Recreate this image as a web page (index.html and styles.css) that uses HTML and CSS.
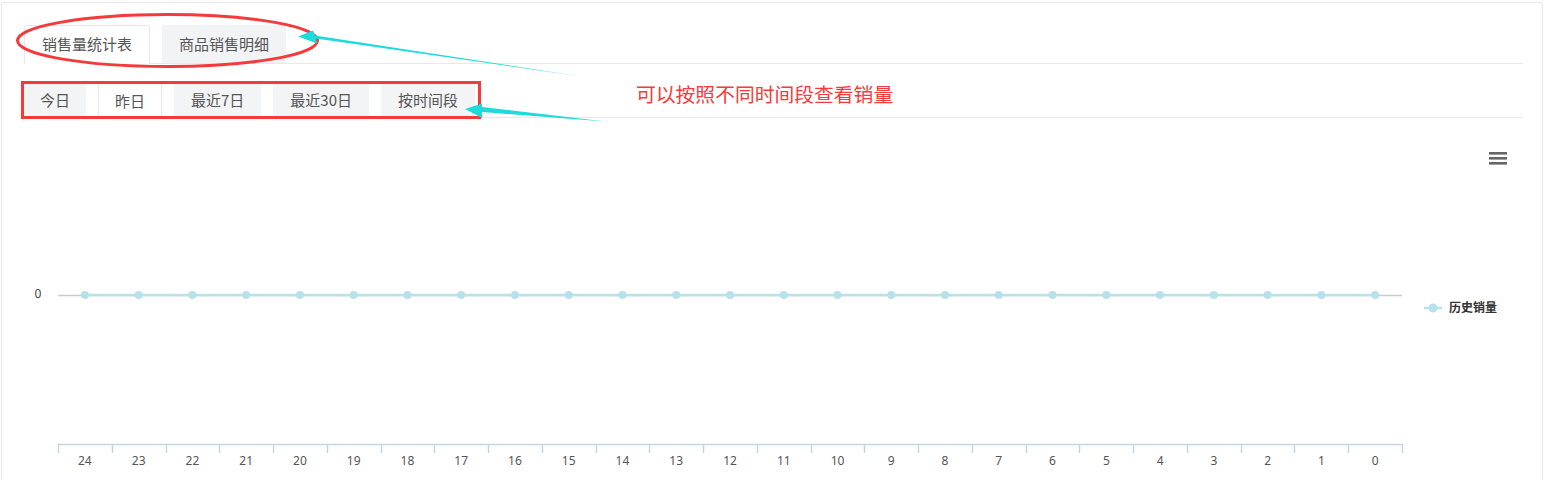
FILE: index.html
```html
<!DOCTYPE html>
<html lang="zh">
<head>
    <meta charset="UTF-8">
    <title>销售量统计</title>
    <link rel="stylesheet" href="styles.css">
</head>
<body>
    <div class="panel">
        <ul class="tabs">
            <li class="tab active">销售量统计表</li>
            <li class="tab">商品销售明细</li>
        </ul>
        <div class="range-bar">
            <button class="range">今日</button>
            <button class="range active">昨日</button>
            <button class="range">最近7日</button>
            <button class="range">最近30日</button>
            <button class="range">按时间段</button>
        </div>
        <div class="chart">
            <svg id="chart" width="1499" height="363" viewBox="0 0 1499 363"></svg>
        </div>
    </div>

    <!-- annotations drawn over the screenshot -->
    <svg class="notes" width="1544" height="481" viewBox="0 0 1544 481">
        <ellipse cx="167.5" cy="40.5" rx="150" ry="26" fill="none" stroke="#f43a3a" stroke-width="3"/>
        <rect x="22.5" y="82.5" width="457" height="35" fill="none" stroke="#f43a3a" stroke-width="3"/>
        <polygon points="578,76 316,38.5 317,43.5 298,36.5 313,30.5 315,35.5" fill="#1ddbdb"/>
        <polygon points="605,121.5 482,112 482,118 465,109 482,103.5 482,107" fill="#1ddbdb"/>
    </svg>
    <span class="note-text">可以按照不同时间段查看销量</span>

    <script>
        const svg = document.getElementById('chart');
        const left = 34, right = 1378, step = (right - left) / 25;
        let html = '';

        // y axis
        html += '<text x="14" y="180" class="ylabel">0</text>';
        html += '<line x1="' + left + '" y1="177.5" x2="' + right + '" y2="177.5" stroke="#cccccc" stroke-width="1.5"/>';

        // series line + points
        const xs = [];
        for (let i = 0; i < 25; i++) xs.push(left + step * (i + 0.5));
        html += '<line x1="' + xs[0] + '" y1="177" x2="' + xs[24] + '" y2="177" stroke="#b7e1eb" stroke-width="2.5"/>';
        xs.forEach(x => {
            html += '<circle cx="' + x + '" cy="177" r="4" fill="#b7e1eb"/>';
        });

        // category axis
        html += '<line x1="' + left + '" y1="326.5" x2="' + right + '" y2="326.5" stroke="#c6d3e3" stroke-width="1.5"/>';
        for (let i = 0; i <= 25; i++) {
            const x = Math.round(left + step * i) + 0.5;
            html += '<line x1="' + x + '" y1="326" x2="' + x + '" y2="335" stroke="#c6d3e3" stroke-width="1.5"/>';
        }
        xs.forEach((x, i) => {
            html += '<text x="' + x + '" y="347" class="xlabel">' + (24 - i) + '</text>';
        });

        // export menu icon
        html += '<rect x="1465" y="34" width="18" height="2.6" fill="#666"/>';
        html += '<rect x="1465" y="39" width="18" height="2.6" fill="#666"/>';
        html += '<rect x="1465" y="44" width="18" height="2.6" fill="#666"/>';

        // legend
        html += '<line x1="1400" y1="190" x2="1418" y2="190" stroke="#b7e1eb" stroke-width="2.5"/>';
        html += '<circle cx="1409" cy="190" r="4.5" fill="#b7e1eb"/>';
        html += '<text x="1425" y="194" class="legend">历史销量</text>';

        svg.innerHTML = html;
    </script>
</body>
</html>
```
FILE: styles.css
```css
body {
    margin: 0;
    font-family: "Noto Sans CJK SC", "Noto Sans", sans-serif;
    background-color: #ffffff;
    color: #555;
    width: 1544px;
    height: 481px;
    overflow: hidden;
    position: relative;
}
.panel {
    margin: 2px 1px 0 1px;
    border: 1px solid #e8e8e8;
    border-bottom: none;
    border-radius: 3px 3px 0 0;
    padding: 22px 19px 0 22px;
    height: 478px;
    box-sizing: border-box;
}
.tabs {
    list-style: none;
    margin: 0;
    padding: 0;
    display: flex;
    gap: 12px;
    border-bottom: 1px solid #e8e8e8;
    height: 38px;
}
.tab {
    height: 38px;
    box-sizing: border-box;
    padding: 0 17px;
    font-size: 15px;
    line-height: 37px;
    color: #555;
    background-color: #f2f3f5;
}
.tab.active {
    background-color: #ffffff;
    border: 1px solid #e8e8e8;
    border-bottom: none;
    border-radius: 3px 3px 0 0;
    padding: 0 17px;
    line-height: 36px;
    margin-bottom: -1px;
    height: 39px;
}
.range-bar {
    margin-top: 18px;
    display: flex;
    gap: 12px;
    border-bottom: 1px solid #e8e8e8;
    height: 35px;
}
.range {
    font-family: inherit;
    font-size: 15px;
    color: #555;
    background-color: #f3f4f6;
    border: none;
    padding: 0 17px;
    height: 35px;
    line-height: 35px;
    cursor: pointer;
}
.range:first-child {
    padding: 0 16px;
}
.range.active {
    background-color: #ffffff;
    border: 1px solid #e8e8e8;
    border-bottom: none;
    padding: 0 16px;
}
.chart svg {
    display: block;
}
.ylabel {
    font-size: 12px;
    fill: #444;
    text-anchor: middle;
    font-family: "Noto Sans", sans-serif;
}
.xlabel {
    font-size: 12px;
    fill: #555;
    text-anchor: middle;
    font-family: "Noto Sans", sans-serif;
}
.legend {
    font-size: 12px;
    font-weight: bold;
    fill: #333;
}
.notes {
    position: absolute;
    left: 0;
    top: 0;
    pointer-events: none;
}
.note-text {
    position: absolute;
    left: 636px;
    top: 80px;
    font-size: 19.8px;
    line-height: 28px;
    color: #f43a3a;
}
```
